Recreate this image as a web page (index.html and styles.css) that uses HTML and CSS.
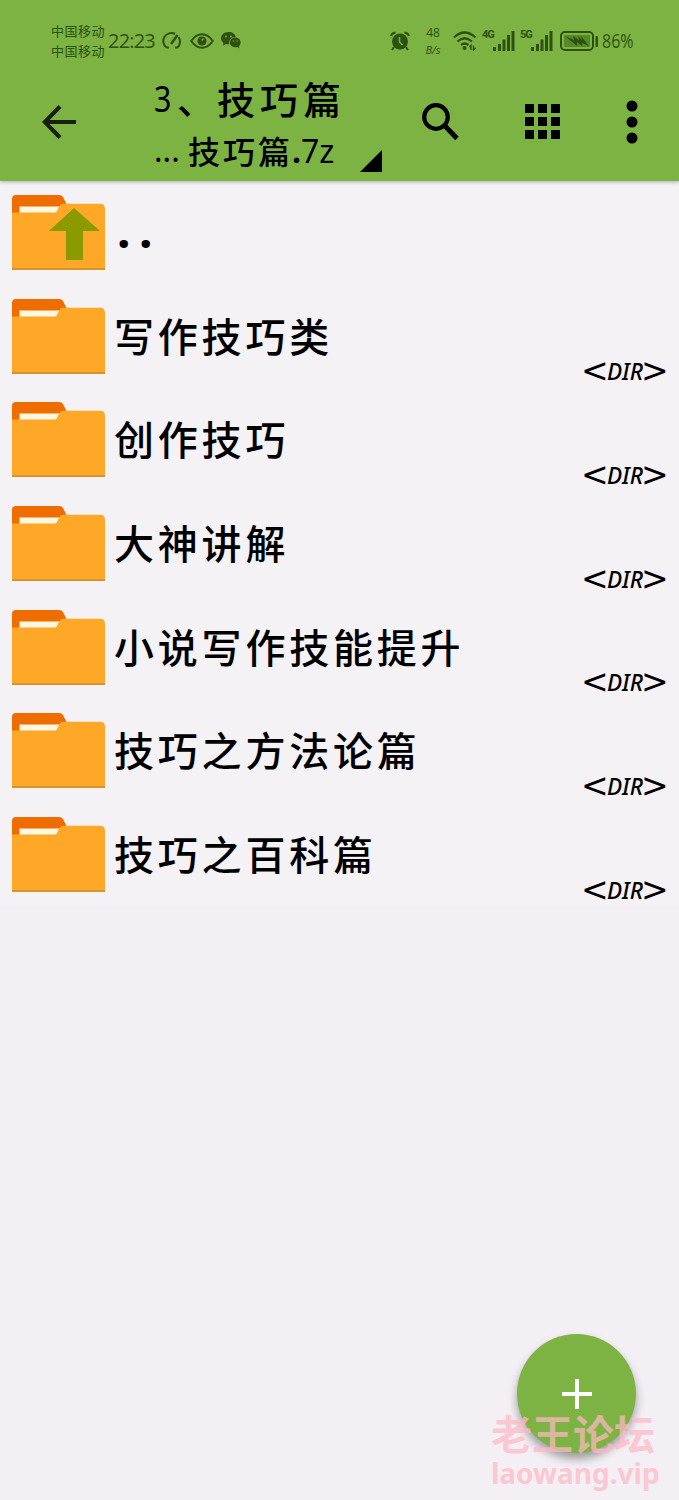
FILE: index.html
```html
<!DOCTYPE html>
<html lang="zh-CN">
<head>
<meta charset="utf-8">
<title>技巧篇.7z</title>
<link rel="stylesheet" href="styles.css">
</head>
<body>
<svg class="defs" width="0" height="0" aria-hidden="true">
  <symbol id="folder" viewBox="0 0 93 75">
    <path fill="#ef6c00" d="M0 18V4Q0 0 4 0H47Q50 0 51 2L55 10V28H0Z"/>
    <path fill="#fff8e1" d="M7.500 11.500H48L44 18H7.500Z"/>
    <path fill="#ffa726" d="M0 17.500H43Q45 17.500 46 14L47.500 11Q48.500 8.800 51 8.800H88Q93 8.800 93 14V75H0Z"/>
    <path fill="#d9932c" d="M0 73H93V75H0Z"/>
  </symbol>
  <symbol id="signal" viewBox="0 0 22 21">
    <path fill="currentColor" d="M0 17h3v4H0zM5 14h3v7H5zM9.500 9.500h3V21h-3zM14 5h3v16h-3zM18.500 1h3v20h-3z"/>
  </symbol>
</svg>
<main class="app">
  <header class="top">
    <div class="status">
      <div class="carrier"><span>中国移动</span><span>中国移动</span></div>
      <span class="clock">22:23</span>
      <svg class="gauge" viewBox="0 0 20 18" fill="none" stroke="currentColor" stroke-width="2"><path d="M4.500 15.500A8 8 0 0 1 13 2M16.500 5A8 8 0 0 1 15.500 15.500H13M4.500 15.500H7"/><path d="M15.500 3L9 12" stroke-width="2.500"/></svg>
      <svg class="eye" viewBox="0 0 24 16" fill="none" stroke="currentColor" stroke-width="2"><path d="M1.200 8Q6 1.200 12 1.200T22.800 8Q18 14.800 12 14.800T1.200 8Z"/><circle cx="12" cy="8" r="4.600" fill="currentColor" stroke="none"/><path stroke="#7cb342" stroke-width="1.300" d="M11.700 7.500L13.500 5.500"/></svg>
      <svg class="chat" viewBox="0 0 20 17" fill="currentColor"><path d="M7.500 0C3 0 0 3 0 6.300 0 8.500 1.200 10 2.500 11L2 13.500 5 12Q7 12.500 8 12.200C7.500 8 10.500 5 14.800 4.800 14 2 11 0 7.500 0Z"/><path d="M14.300 5.600C11 5.600 8.800 8 8.800 10.500 8.800 13.500 12 16 16 15L18.300 16.300 17.900 14.200C21 11.500 19.800 5.600 14.300 5.600Z"/><g fill="#7cb342"><circle cx="5" cy="4.500" r=".9"/><circle cx="10" cy="4.500" r=".9"/><circle cx="12.500" cy="9" r=".7"/><circle cx="16" cy="9" r=".7"/></g></svg>
      <svg class="alarm" viewBox="0 0 20 20"><g fill="none" stroke="currentColor" stroke-width="2"><path d="M1 5Q2 2 5.500 1.500M19 5Q18 2 14.500 1.500M4 16L2 19M16 16L18 19"/></g><circle cx="10" cy="10.500" r="8" fill="currentColor"/><path d="M9.500 6V11L12.500 14" fill="none" stroke="#7cb342" stroke-width="1.600"/></svg>
      <div class="speed"><span>48</span><span>B/s</span></div>
      <svg class="wifi" viewBox="0 0 24 20" fill="none" stroke="currentColor" stroke-width="2.200"><path d="M1 6.500Q11.500-3.500 22.500 6.500M4.500 10.500Q11.500 4 19 10.500M8 14Q11.500 11 15.500 14"/><circle cx="11.500" cy="17" r="2" fill="currentColor" stroke="none"/><path stroke-width="1.400" d="M18 19V14.500L16.500 16M20.500 14.500V19L22.500 17"/></svg>
      <span class="net net-4g">4G</span>
      <svg class="signal"><use href="#signal"/></svg>
      <span class="net net-5g">5G</span>
      <svg class="signal"><use href="#signal"/></svg>
      <svg class="battery" viewBox="0 0 39 20"><rect x="1" y="1" width="32" height="18" rx="4" fill="none" stroke="currentColor" stroke-width="2"/><rect x="4" y="4" width="26" height="12" rx="1" fill="#568a29"/><path fill="currentColor" d="M5 5L14 9 13 5 19 9 18 5 22 9 21 5 29 15 22 12 22 15 17 11 17 15Z"/><rect x="35.500" y="5" width="2.500" height="11" rx="1" fill="currentColor"/></svg>
      <span class="percent">86%</span>
    </div>
    <div class="toolbar">
      <svg class="back" viewBox="0 0 35 34" fill="none" stroke="#16200c" stroke-width="4"><path d="M34 17H3M18 1.500L2.800 17 18 32.500"/></svg>
      <div class="titles">
        <h1 class="title"><span class="num">3</span><span class="comma">、</span>技巧篇</h1>
        <div class="path"><span class="dots">...</span><span class="file">技巧篇</span><span class="ext"><b>.</b>7z</span></div>
      </div>
      <svg class="corner" viewBox="0 0 22 22"><path d="M22 0V22H0Z"/></svg>
      <svg class="search" viewBox="0 0 37 38" fill="none" stroke="#000"><circle cx="14" cy="14" r="11.800" stroke-width="4.200"/><path d="M23.500 23.500L35 35.500" stroke-width="4.800"/></svg>
      <svg class="apps" viewBox="0 0 35 35"><path d="M0 0h9v9H0zM13 0h9v9h-9zM26 0h9v9h-9zM0 13h9v9H0zM13 13h9v9h-9zM26 13h9v9h-9zM0 26h9v9H0zM13 26h9v9h-9zM26 26h9v9h-9z"/></svg>
      <svg class="more" viewBox="0 0 12 44"><circle cx="6" cy="6" r="5.500"/><circle cx="6" cy="22" r="5.500"/><circle cx="6" cy="38" r="5.500"/></svg>
    </div>
  </header>
  <ul class="list">
    <li class="row">
      <svg class="folder" viewBox="0 0 93 75"><use href="#folder"/><path fill="#8a9a00" d="M62 13L88 36H71V65H54V36H37Z"/></svg>
      <span class="name parent">..</span>
    </li>
    <li class="row"><svg class="folder"><use href="#folder"/></svg><span class="name">写作技巧类</span><span class="dir"><i>&lt;</i><em>DIR</em><i>&gt;</i></span></li>
    <li class="row"><svg class="folder"><use href="#folder"/></svg><span class="name">创作技巧</span><span class="dir"><i>&lt;</i><em>DIR</em><i>&gt;</i></span></li>
    <li class="row"><svg class="folder"><use href="#folder"/></svg><span class="name">大神讲解</span><span class="dir"><i>&lt;</i><em>DIR</em><i>&gt;</i></span></li>
    <li class="row"><svg class="folder"><use href="#folder"/></svg><span class="name">小说写作技能提升</span><span class="dir"><i>&lt;</i><em>DIR</em><i>&gt;</i></span></li>
    <li class="row"><svg class="folder"><use href="#folder"/></svg><span class="name">技巧之方法论篇</span><span class="dir"><i>&lt;</i><em>DIR</em><i>&gt;</i></span></li>
    <li class="row"><svg class="folder"><use href="#folder"/></svg><span class="name">技巧之百科篇</span><span class="dir"><i>&lt;</i><em>DIR</em><i>&gt;</i></span></li>
  </ul>
  <button class="fab" aria-label="+"><svg viewBox="0 0 30 30"><path d="M15 0V30M0 15H30" stroke="#fff" stroke-width="4"/></svg></button>
  <div class="watermark"><span class="forum">老王论坛</span><span class="site">laowang.vip</span></div>
</main>
</body>
</html>
```

FILE: styles.css
```css
* { box-sizing: border-box; }
body {
  margin: 0;
  background: #f3eff4;
  font-family: "Noto Sans", "Noto Sans CJK SC", sans-serif;
  color: #000;
}
svg { display: block; flex: none; }
.defs { position: absolute; }
.app { position: relative; width: 679px; height: 1500px; overflow: hidden; }
.top {
  position: relative;
  height: 181px;
  background: #7cb342;
  box-shadow: 0 1px 4px rgba(0, 0, 0, .3);
}

/* status bar */
.status {
  display: flex;
  align-items: center;
  height: 81px;
  padding-left: 51px;
  color: #2c5110;
  white-space: nowrap;
}
.status > * { flex: none; }
.carrier {
  display: flex;
  flex-direction: column;
  width: 57px;
  font: 13px/20px "Noto Sans CJK SC", sans-serif;
  letter-spacing: .5px;
}
.clock { width: 54px; font: 500 20px/24px "Open Sans", sans-serif; letter-spacing: -.8px; }
.gauge { width: 20px; height: 18px; }
.eye { width: 24px; height: 16px; margin-left: 8px; }
.chat { width: 20px; height: 17px; margin-left: 7px; }
.alarm { width: 20px; height: 20px; margin-left: 149px; }
.speed {
  display: flex;
  flex-direction: column;
  align-items: center;
  width: 18px;
  margin-left: 14px;
  font: 12px/17px "Open Sans", sans-serif;
}
.speed span:last-child { font-style: italic; font-size: 11px; }
.wifi { width: 24px; height: 20px; margin-left: 11px; }
.net { align-self: flex-start; margin-top: 29px; font: bold 11px/12px Roboto, sans-serif; letter-spacing: -1px; }
.net-4g { width: 11px; margin-left: 5px; }
.net-5g { width: 11px; margin-left: 5px; }
.signal { width: 22px; height: 21px; }
.battery { width: 39px; height: 20px; margin-left: 7px; }
.percent { margin-left: 3px; font: 20px/24px "Open Sans", sans-serif; transform: scaleX(.8); transform-origin: left; }

/* toolbar */
.toolbar { display: flex; align-items: center; height: 81px; padding-left: 42px; }
.back { width: 35px; height: 34px; }
.titles { width: 206px; margin-left: 77px; margin-top: 6px; white-space: nowrap; }
.title { display: flex; margin: 0; font: 500 38px/53px "Noto Sans CJK SC", sans-serif; letter-spacing: 5px; }
.num { width: 23px; font: 37px/53px "Noto Sans", sans-serif; letter-spacing: 0; transform: scaleX(.82); transform-origin: left; }
.comma { width: 40px; letter-spacing: 0; }
.path { display: flex; font: 500 32px/52px "Noto Sans CJK SC", sans-serif; }
.dots { width: 34px; font: 32px/52px "Noto Sans", sans-serif; }
.file { width: 104px; letter-spacing: 3px; }
.ext { font: 32px/54px "Noto Sans", sans-serif; }
.corner { width: 22px; height: 22px; align-self: flex-end; margin-bottom: -10px; }
.search { width: 37px; height: 38px; margin-left: 40px; }
.apps { width: 35px; height: 35px; margin-left: 66px; }
.more { width: 12px; height: 44px; margin-left: 66px; }

/* file list */
.list { margin: 0; padding: 0; list-style: none; background: #f4f2f5; }
.row { display: flex; height: 103.67px; padding: 14px 13px 0 12px; }
.folder { width: 93px; height: 75px; }
.name { margin: 7px 0 0 9px; font: 500 40px/58px "Noto Sans CJK SC", sans-serif; letter-spacing: 3.8px; white-space: nowrap; }
.parent { margin-left: 12px; margin-top: 6px; font: bold 48px/58px "Noto Sans", sans-serif; letter-spacing: 8.500px; }
.dir { display: flex; align-items: center; align-self: flex-end; width: 82px; height: 34px; margin: 0 0 0 auto; }
.dir em { width: 37px; flex: none; font: italic 500 24px/34px "Noto Sans", sans-serif; transform: scaleX(.94); transform-origin: left; }
.dir i { width: 23px; flex: none; font: 33px/34px "DejaVu Sans", sans-serif; text-indent: -3px; }

/* floating controls */
.fab {
  position: absolute;
  left: 517px;
  top: 1334px;
  display: grid;
  place-items: center;
  width: 119px;
  height: 119px;
  padding: 0;
  border: 0;
  border-radius: 50%;
  background: #7cb342;
  box-shadow: 0 6px 10px rgba(0, 0, 0, .35);
}
.fab svg { width: 30px; height: 30px; }
.watermark {
  position: absolute;
  left: 491px;
  top: 1408px;
  display: flex;
  flex-direction: column;
  color: rgba(255, 184, 198, .72);
  font-weight: bold;
  white-space: nowrap;
}
.forum { font: bold 41px/48px "Noto Sans CJK SC", sans-serif; }
.site { font: bold 28px/35px "Noto Sans", sans-serif; }
```
